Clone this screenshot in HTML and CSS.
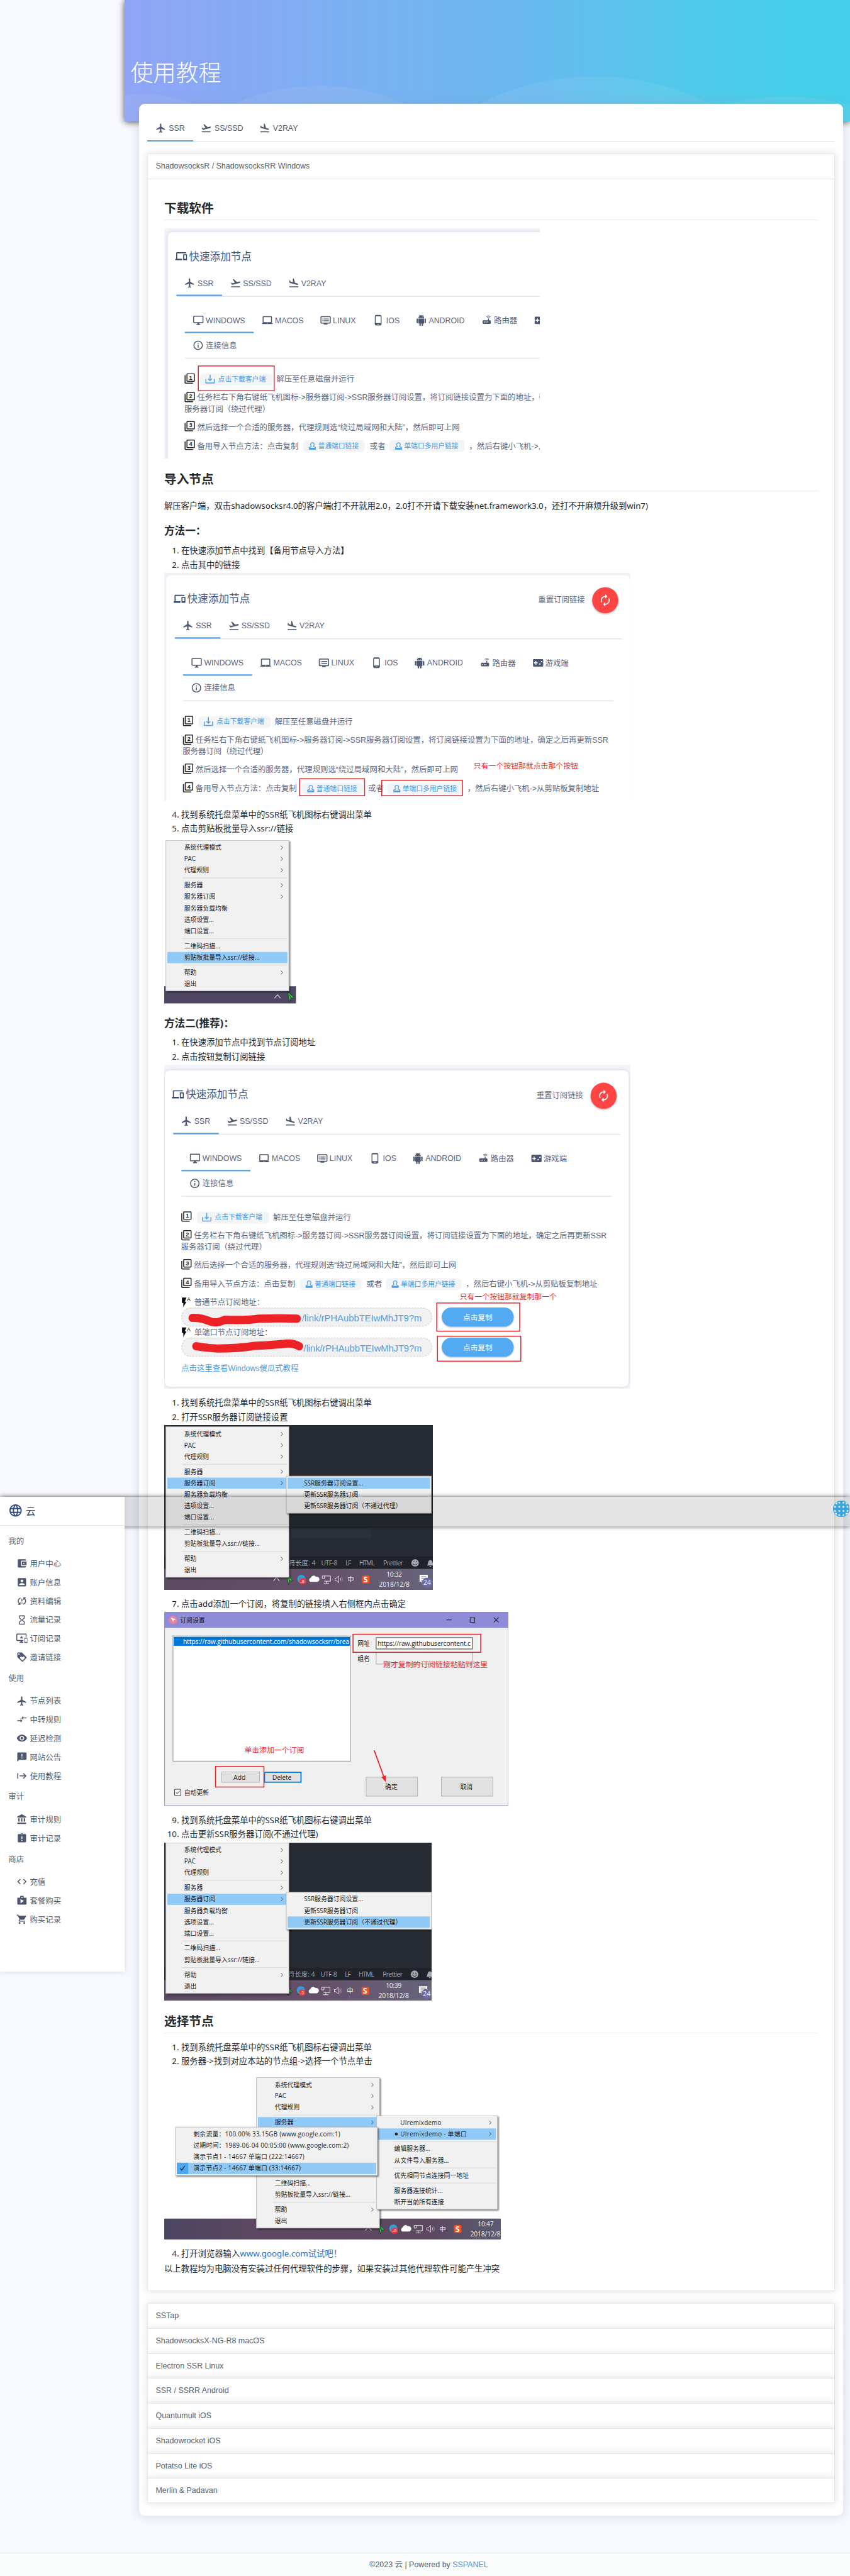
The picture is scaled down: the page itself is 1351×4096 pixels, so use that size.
FILE: index.html
```html
<!DOCTYPE html>
<html lang="zh">
<head>
<meta charset="utf-8">
<title>使用教程</title>
<link rel="stylesheet" href="styles.css">
</head>
<body>
<svg class="sprite" width="0" height="0" aria-hidden="true">
  <defs>
    <symbol id="flight" viewBox="0 0 24 24"><path d="M21 16v-2l-8-5V3.5c0-.83-.67-1.5-1.5-1.5S10 2.67 10 3.5V9l-8 5v2l8-2.5V19l-2 1.5V22l3.5-1 3.5 1v-1.5L13 19v-5.5l8 2.5z"/></symbol>
    <symbol id="takeoff" viewBox="0 0 24 24"><path d="M2.5 19h19v2h-19v-2zm19.57-9.36c-.21-.8-1.04-1.28-1.84-1.06L14.92 10l-6.9-6.43-1.93.51 4.14 7.17-4.97 1.33-1.97-1.54-1.45.39 2.59 4.49s7.12-1.9 16.57-4.43c.81-.23 1.28-1.05 1.07-1.85z"/></symbol>
    <symbol id="land" viewBox="0 0 24 24"><path d="M2.5 19h19v2h-19v-2zm16.84-3.15c.8.21 1.62-.26 1.84-1.06.21-.8-.26-1.62-1.06-1.84l-5.31-1.42-2.76-9.02L10.12 2v8.28L5.15 8.95l-.93-2.32-1.45-.39v5.17l16.57 4.44z"/></symbol>
    <symbol id="devices" viewBox="0 0 24 24"><path d="M4 6h18V4H4c-1.1 0-2 .9-2 2v11H0v3h14v-3H4V6zm19 2h-6c-.55 0-1 .45-1 1v10c0 .55.45 1 1 1h6c.55 0 1-.45 1-1V9c0-.55-.45-1-1-1zm-1 9h-4v-7h4v7z"/></symbol>
    <symbol id="desktop" viewBox="0 0 24 24"><path d="M21 2H3c-1.1 0-2 .9-2 2v12c0 1.1.9 2 2 2h7v2H8v2h8v-2h-2v-2h7c1.1 0 2-.9 2-2V4c0-1.1-.9-2-2-2zm0 14H3V4h18v12z"/></symbol>
    <symbol id="laptop" viewBox="0 0 24 24"><path d="M20 18c1.1 0 1.99-.9 1.99-2L22 5c0-1.1-.9-2-2-2H4c-1.1 0-2 .9-2 2v11c0 1.1.9 2 2 2H0c0 1.1.9 2 2 2h20c1.1 0 2-.9 2-2h-4zM4 5h16v11H4V5zm8 14c-.55 0-1-.45-1-1s.45-1 1-1 1 .45 1 1-.45 1-1 1z"/></symbol>
    <symbol id="dvr" viewBox="0 0 24 24"><path d="M21 3H3c-1.1 0-2 .9-2 2v12c0 1.1.9 2 2 2h5v2h8v-2h5c1.1 0 1.99-.9 1.99-2L23 5c0-1.1-.9-2-2-2zm0 14H3V5h18v12zm-2-9H8v2h11V8zm0 4H8v2h11v-2zM7 8H5v2h2V8zm0 4H5v2h2v-2z"/></symbol>
    <symbol id="phone" viewBox="0 0 24 24"><path d="M16 1H8C6.34 1 5 2.34 5 4v16c0 1.66 1.34 3 3 3h8c1.66 0 3-1.34 3-3V4c0-1.66-1.34-3-3-3zm-2 20h-4v-1h4v1zm3.25-3H6.75V4h10.5v14z"/></symbol>
    <symbol id="android" viewBox="0 0 24 24"><path d="M6 18c0 .55.45 1 1 1h1v3.5c0 .83.67 1.5 1.5 1.5s1.5-.67 1.5-1.5V19h2v3.5c0 .83.67 1.5 1.5 1.5s1.5-.67 1.5-1.5V19h1c.55 0 1-.45 1-1V8H6v10zM3.5 8C2.67 8 2 8.67 2 9.5v7c0 .83.67 1.5 1.5 1.5S5 17.33 5 16.5v-7C5 8.67 4.33 8 3.5 8zm17 0c-.83 0-1.5.67-1.5 1.5v7c0 .83.67 1.5 1.5 1.5s1.5-.67 1.5-1.5v-7c0-.83-.67-1.5-1.5-1.5zm-4.97-5.84l1.3-1.3c.2-.2.2-.51 0-.71-.2-.2-.51-.2-.71 0l-1.48 1.48C13.85 1.23 12.95 1 12 1c-.96 0-1.86.23-2.66.63L7.85.15c-.2-.2-.51-.2-.71 0-.2.2-.2.51 0 .71l1.31 1.31C6.97 3.26 6 5.01 6 7h12c0-1.99-.97-3.75-2.47-4.84zM10 5H9V4h1v1zm5 0h-1V4h1v1z"/></symbol>
    <symbol id="router" viewBox="0 0 24 24"><path d="M20.2 5.9l.8-.8C19.6 3.7 17.8 3 16 3s-3.6.7-5 2.1l.8.8C13 4.8 14.5 4.2 16 4.2s3 .6 4.2 1.7zm-.9.8c-.9-.9-2.1-1.4-3.3-1.4s-2.4.5-3.3 1.4l.8.8c.7-.7 1.6-1 2.5-1 .9 0 1.8.3 2.5 1l.8-.8zM19 13h-2V9h-2v4H5c-1.1 0-2 .9-2 2v4c0 1.1.9 2 2 2h14c1.1 0 2-.9 2-2v-4c0-1.1-.9-2-2-2zM8 18H6v-2h2v2zm3.5 0h-2v-2h2v2zm3.5 0h-2v-2h2v2z"/></symbol>
    <symbol id="game" viewBox="0 0 24 24"><path d="M21 4H3c-1.1 0-2 .9-2 2v12c0 1.1.9 2 2 2h18c1.1 0 2-.9 2-2V6c0-1.1-.9-2-2-2zm-10 9H8v3H6v-3H3v-2h3V8h2v3h3v2zm4.5 3c-.83 0-1.5-.67-1.5-1.5s.67-1.5 1.5-1.5 1.5.67 1.5 1.5-.67 1.5-1.5 1.5zm4-5c-.83 0-1.5-.67-1.5-1.5S18.67 8 19.5 8s1.5.67 1.5 1.5-.67 1.5-1.5 1.5z"/></symbol>
    <symbol id="info" viewBox="0 0 24 24"><path d="M11 17h2v-6h-2v6zm1-15C6.48 2 2 6.48 2 12s4.48 10 10 10 10-4.48 10-10S17.52 2 12 2zm0 18c-4.41 0-8-3.59-8-8s3.59-8 8-8 8 3.59 8 8-3.59 8-8 8zM11 9h2V7h-2v2z"/></symbol>
    <symbol id="frame" viewBox="0 0 24 24"><path d="M3 5H1v16c0 1.1.9 2 2 2h16v-2H3V5zm18-4H7c-1.1 0-2 .9-2 2v14c0 1.1.9 2 2 2h14c1.1 0 2-.9 2-2V3c0-1.1-.9-2-2-2zm0 16H7V3h14v14z"/></symbol>
    <symbol id="renew" viewBox="0 0 24 24"><path d="M12 6v3l4-4-4-4v3c-4.42 0-8 3.58-8 8 0 1.57.46 3.03 1.24 4.26L6.7 14.8c-.45-.83-.7-1.79-.7-2.8 0-3.31 2.69-6 6-6zm6.76 1.74L17.3 9.2c.44.84.7 1.79.7 2.8 0 3.31-2.69 6-6 6v-3l-4 4 4 4v-3c4.42 0 8-3.58 8-8 0-1.57-.46-3.03-1.24-4.26z"/></symbol>
    <symbol id="bolt" viewBox="0 0 24 24"><path d="M3 2v12h3v9l7-12H9l4-9H3z"/></symbol>
    <symbol id="download" viewBox="0 0 24 24"><path d="M12 1v14M7.5 10.5L12 15l4.5-4.5M2 11v9.500h20V11" fill="none" stroke="currentColor" stroke-width="2.2"/></symbol>
    <symbol id="stamp" viewBox="0 0 24 24"><path d="M12 2.500a5.500 5.500 0 0 1 3.500 9.700V14L21 16.500V19H3v-2.500L8.500 14v-1.800A5.500 5.500 0 0 1 12 2.500z" fill="none" stroke="currentColor" stroke-width="2.2"/><path d="M2 18h20v5H2z"/></symbol>
    <symbol id="globe" viewBox="0 0 24 24"><path d="M11.99 2C6.47 2 2 6.48 2 12s4.47 10 9.99 10C17.52 22 22 17.52 22 12S17.52 2 11.99 2zm6.93 6h-2.95c-.32-1.25-.78-2.45-1.38-3.56 1.84.63 3.37 1.91 4.33 3.56zM12 4.04c.83 1.2 1.48 2.53 1.91 3.96h-3.82c.43-1.43 1.08-2.76 1.91-3.96zM4.26 14C4.1 13.36 4 12.69 4 12s.1-1.36.26-2h3.38c-.08.66-.14 1.32-.14 2 0 .68.06 1.34.14 2H4.26zm.82 2h2.95c.32 1.25.78 2.45 1.38 3.56-1.84-.63-3.37-1.9-4.33-3.56zm2.95-8H5.08c.96-1.66 2.49-2.93 4.33-3.56C8.81 5.55 8.35 6.75 8.03 8zM12 19.96c-.83-1.2-1.48-2.53-1.91-3.96h3.82c-.43 1.43-1.08 2.76-1.91 3.96zM14.34 14H9.66c-.09-.66-.16-1.32-.16-2 0-.68.07-1.35.16-2h4.68c.09.65.16 1.32.16 2 0 .68-.07 1.34-.16 2zm.25 5.56c.6-1.11 1.06-2.31 1.38-3.56h2.95c-.96 1.65-2.49 2.93-4.33 3.56zM16.36 14c.08-.66.14-1.32.14-2 0-.68-.06-1.34-.14-2h3.38c.16.64.26 1.31.26 2s-.1 1.36-.26 2h-3.38z"/></symbol>
    <symbol id="wallet" viewBox="0 0 24 24"><path d="M21 18v1c0 1.1-.9 2-2 2H5c-1.11 0-2-.9-2-2V5c0-1.1.89-2 2-2h14c1.1 0 2 .9 2 2v1h-9c-1.11 0-2 .9-2 2v8c0 1.1.89 2 2 2h9zm-9-2h10V8H12v8zm4-2.5c-.83 0-1.5-.67-1.5-1.5s.67-1.5 1.5-1.5 1.5.67 1.5 1.5-.67 1.5-1.5 1.5z"/></symbol>
    <symbol id="account" viewBox="0 0 24 24"><path d="M3 5v14c0 1.1.89 2 2 2h14c1.1 0 2-.9 2-2V5c0-1.1-.9-2-2-2H5c-1.11 0-2 .9-2 2zm12 4c0 1.66-1.34 3-3 3s-3-1.34-3-3 1.34-3 3-3 3 1.34 3 3zm-9 8c0-2 4-3.1 6-3.1s6 1.1 6 3.1v1H6v-1z"/></symbol>
    <symbol id="sync" viewBox="0 0 24 24"><path d="M3 12c0 2.21.91 4.2 2.36 5.64L3 20h6v-6l-2.24 2.24C5.68 15.15 5 13.66 5 12c0-2.61 1.67-4.83 4-5.65V4.26C5.55 5.15 3 8.27 3 12zm8 5h2v-2h-2v2zM21 4h-6v6l2.24-2.24C18.32 8.85 19 10.34 19 12c0 2.61-1.67 4.83-4 5.65v2.09c3.45-.89 6-4.01 6-7.74 0-2.21-.91-4.2-2.36-5.64L21 4zm-10 9h2V7h-2v6z"/></symbol>
    <symbol id="hourglass" viewBox="0 0 24 24"><path d="M6 2v6h.01L6 8.01 10 12l-4 4 .01.01H6V22h12v-5.99h-.01L18 16l-4-4 4-3.99-.01-.01H18V2H6zm10 14.5V20H8v-3.5l4-4 4 4zm-4-5l-4-4V4h8v3.500l-4 4z"/></symbol>
    <symbol id="important" viewBox="0 0 24 24"><path d="M23 11.01L18 11c-.55 0-1 .45-1 1v9c0 .55.45 1 1 1h5c.55 0 1-.45 1-1v-9c0-.55-.45-.99-1-.99zM23 20h-5v-7h5v7zM20 2H2C.89 2 0 2.89 0 4v12c0 1.1.89 2 2 2h7v2H7v2h8v-2h-2v-2h2v-2H2V4h18v5h2V4c0-1.11-.9-2-2-2zm-8.03 7L11 6l-.97 3H7l2.47 1.76-.94 2.91 2.47-1.8 2.47 1.8-.94-2.91L15 9h-3.03z"/></symbol>
    <symbol id="loyalty" viewBox="0 0 24 24"><path d="M21.41 11.58l-9-9C12.05 2.22 11.55 2 11 2H4c-1.1 0-2 .9-2 2v7c0 .55.22 1.05.59 1.42l9 9c.36.36.86.58 1.41.58.55 0 1.05-.22 1.41-.59l7-7c.37-.36.59-.86.59-1.41 0-.55-.23-1.06-.59-1.42zM5.5 7C4.67 7 4 6.33 4 5.5S4.67 4 5.5 4 7 4.67 7 5.5 6.33 7 5.5 7zm11.77 8.27L13 19.54l-4.27-4.27C8.28 14.81 8 14.19 8 13.5c0-1.38 1.12-2.5 2.5-2.5.69 0 1.32.28 1.77.74l.73.72.73-.73c.45-.45 1.08-.73 1.77-.73 1.38 0 2.5 1.12 2.5 2.5 0 .69-.28 1.32-.73 1.77z"/></symbol>
    <symbol id="compare" viewBox="0 0 24 24"><path d="M9.01 14H2v2h7.01v3L13 15l-3.99-4v3zm5.98-1v-3H22V8h-7.01V5L11 9l3.99 4z"/></symbol>
    <symbol id="eye" viewBox="0 0 24 24"><path d="M12 4.5C7 4.5 2.73 7.61 1 12c1.73 4.39 6 7.5 11 7.5s9.27-3.11 11-7.5c-1.73-4.39-6-7.5-11-7.5zM12 17c-2.76 0-5-2.24-5-5s2.24-5 5-5 5 2.24 5 5-2.24 5-5 5zm0-8c-1.66 0-3 1.34-3 3s1.34 3 3 3 3-1.34 3-3-1.34-3-3-3z"/></symbol>
    <symbol id="announce" viewBox="0 0 24 24"><path d="M20 2H4c-1.1 0-1.99.9-1.99 2L2 22l4-4h14c1.1 0 2-.9 2-2V4c0-1.1-.9-2-2-2zm-7 9h-2V5h2v6zm0 4h-2v-2h2v2z"/></symbol>
    <symbol id="start" viewBox="0 0 24 24"><path d="M2 6h2.200v12H2zM7 11h11.200l-4-4 1.400-1.400L22 12l-6.400 6.400-1.400-1.400 4-4H7z"/></symbol>
    <symbol id="bank" viewBox="0 0 24 24"><path d="M4 10v7h3v-7H4zm6 0v7h3v-7h-3zM2 22h19v-3H2v3zm14-12v7h3v-7h-3zm-4.5-9L2 6v2h19V6l-9.5-5z"/></symbol>
    <symbol id="late" viewBox="0 0 24 24"><path d="M19 3h-4.18C14.4 1.84 13.3 1 12 1c-1.3 0-2.4.84-2.82 2H5c-1.1 0-2 .9-2 2v14c0 1.1.9 2 2 2h14c1.1 0 2-.9 2-2V5c0-1.1-.9-2-2-2zm-6 15h-2v-2h2v2zm0-4h-2V8h2v6zm-1-9c-.55 0-1-.45-1-1s.45-1 1-1 1 .45 1 1-.45 1-1 1z"/></symbol>
    <symbol id="code" viewBox="0 0 24 24"><path d="M9.4 16.6L4.8 12l4.6-4.6L8 6l-6 6 6 6 1.4-1.4zm5.2 0l4.6-4.6-4.6-4.6L16 6l6 6-6 6-1.4-1.4z"/></symbol>
    <symbol id="shop" viewBox="0 0 24 24"><path d="M16 6V4c0-1.11-.89-2-2-2h-4c-1.11 0-2 .89-2 2v2H2v13c0 1.11.89 2 2 2h16c1.11 0 2-.89 2-2V6h-6zm-6-2h4v2h-4V4zM9 18V9l7.5 4L9 18z"/></symbol>
    <symbol id="cart" viewBox="0 0 24 24"><path d="M7 18c-1.1 0-1.99.9-1.99 2S5.9 22 7 22s2-.9 2-2-.9-2-2-2zM1 2v2h2l3.6 7.59-1.35 2.45c-.16.28-.25.61-.25.96 0 1.1.9 2 2 2h12v-2H7.42c-.14 0-.25-.11-.25-.25l.03-.12.9-1.63h7.45c.75 0 1.41-.41 1.75-1.03l3.58-6.49c.08-.14.12-.31.12-.48 0-.55-.45-1-1-1H5.21l-.94-2H1zm16 16c-1.1 0-1.99.9-1.99 2s.89 2 1.99 2 2-.9 2-2-.9-2-2-2z"/></symbol>

    <linearGradient id="taskbar"><stop offset="0" stop-color="#5b4a62"/><stop offset=".6" stop-color="#65506a"/><stop offset="1" stop-color="#66657c"/></linearGradient>
    <linearGradient id="taskbar-wide"><stop offset="0" stop-color="#4b4561"/><stop offset=".3" stop-color="#5e4861"/><stop offset=".8" stop-color="#5c4960"/><stop offset="1" stop-color="#5b5b71"/></linearGradient>
    <pattern id="dots" width="11.15" height="11.15" patternUnits="userSpaceOnUse"><circle cx="5.6" cy="5.6" r="2.4" fill="#fff"/></pattern>

    <g id="chev"><path d="M-2.500-5L2.500 0-2.500 5" fill="none" stroke="#444" stroke-width="1.6"/></g>
    <g id="menu-lines">
      <path d="M44 100.500h282M44 263.400h282M44 334.800h282" stroke="#d5d5d5" stroke-width="1.5"/>
      <use href="#chev" x="311" y="19.4"/><use href="#chev" x="311" y="49.5"/><use href="#chev" x="311" y="80"/>
      <use href="#chev" x="311" y="120.3"/><use href="#chev" x="311" y="151"/><use href="#chev" x="311" y="354.5"/>
    </g>
    <g id="plane"><path d="M-9-16L10 4 1 3-2 14z" fill="#43c552" stroke="#1c4022" stroke-width="1.5"/><path d="M-9-16L1 3" stroke="#1c4022" stroke-width="1.5"/></g>
    <g id="tray">
      <path d="M733 4l8-9 8 9" fill="none" stroke="#ddd" stroke-width="2"/>
      <use href="#plane" x="775.6" y="0"/>
      <circle cx="808" cy="-1" r="11" fill="#2f9fd8"/><rect x="803" y="-3" width="17" height="16" rx="6" fill="#ea3b41"/>
      <path d="M832 7a6 6 0 0 1 1-11 8 8 0 0 1 14-3 7 7 0 0 1 4 14z" fill="#fff"/>
      <path d="M864-9h22v14h-17M875 5v6M868 11h14M864-9v7h6v-7" fill="none" stroke="#eee" stroke-width="1.6"/>
      <path d="M898-3h4l6-6v18l-6-6h-4zM912-4q3 4 0 8" fill="none" stroke="#eee" stroke-width="1.5"/><path d="M915-7q6 7 0 14" fill="none" stroke="#999" stroke-width="1.5"/>
      <rect x="971" y="-10" width="20" height="21" rx="4" fill="#f4511e"/>
    </g>
    <g id="notice"><path d="M1125-11h22v18h-12l-4 5v-5h-6z" fill="#fff"/><path d="M1129-6h14M1129-1h14M1129 4h14" stroke="#66657c" stroke-width="1.6"/><circle cx="1145" cy="10" r="13.5" fill="#6c6ca3"/></g>
    <g id="face"><circle cx="1113" cy="0" r="10" fill="#a3a9b5"/><circle cx="1109.5" cy="-3" r="1.6" fill="#202329"/><circle cx="1116.5" cy="-3" r="1.6" fill="#202329"/><path d="M1107 2q6 7 12 0" fill="none" stroke="#202329" stroke-width="1.6"/><path d="M1145 7c4-4 1-14 9-15 8 1 5 11 9 15zM1151 8h6l-3 3z" fill="#a3a9b5"/></g>

    <g id="panel-shapes">
      <use href="#devices" x="465" y="1591" width="32" height="32" fill="#32496f"/>
      <g fill="#4c566e">
        <use href="#flight" x="489" y="1664" width="30" height="30"/><use href="#takeoff" x="612" y="1664" width="30" height="30"/><use href="#land" x="768" y="1664" width="30" height="30"/>
        <use href="#desktop" x="512" y="1764" width="30" height="30"/><use href="#laptop" x="697" y="1764" width="30" height="30"/><use href="#dvr" x="853.5" y="1764" width="30" height="30"/><use href="#phone" x="994" y="1763" width="31" height="31"/><use href="#android" x="1110" y="1764" width="30" height="30"/><use href="#router" x="1286" y="1763" width="29" height="29"/><use href="#game" x="1428" y="1764" width="30" height="30"/>
        <use href="#info" x="511.5" y="1831" width="30" height="30"/>
      </g>
      <path d="M468.400 1714.500H1668.500M490.700 1880.600H1645" stroke="#e4e6e9" stroke-width="2.5"/>
      <path d="M468.400 1712H590.700M490.700 1811.600H675.600" stroke="#559fdf" stroke-width="4"/>
      <g fill="#222"><use href="#frame" x="489" y="1920" width="30" height="30"/><use href="#frame" x="489" y="1970" width="30" height="30"/><use href="#frame" x="489" y="2048" width="30" height="30"/><use href="#frame" x="489" y="2098" width="30" height="30"/></g>
      <g fill="#f3f4f6"><rect x="532" y="1922" width="194" height="31.5" rx="9"/><rect x="808.6" y="2100.5" width="165" height="31.5" rx="9"/><rect x="1039" y="2100.5" width="202" height="31.5" rx="9"/></g>
      <g color="#4a9fea" fill="#4a9fea"><use href="#download" x="545" y="1924" width="27" height="27"/><use href="#stamp" x="822" y="2105" width="22" height="22"/><use href="#stamp" x="1053" y="2105" width="22" height="22"/></g>
    </g>
    <g id="reset"><circle class="fab" cx="1623" cy="1610.8" r="35" fill="#ff4444"/><use href="#renew" x="1605" y="1593" width="36" height="36" fill="#fff"/></g>
  </defs>
</svg>

<main class="content">
  <header class="hero">
    <svg class="waves" width="1153" height="193" viewBox="334 0 1946 326" preserveAspectRatio="none" fill="#fff" fill-opacity=".07"><circle cx="376" cy="664" r="412"/><circle cx="857" cy="791" r="561"/><circle cx="1595" cy="891" r="686"/><circle cx="2107" cy="884" r="625"/></svg>
    <h1>使用教程</h1>
  </header>

  <section class="card">
    <nav class="tabs">
      <a class="tab active"><svg><use href="#flight"/></svg>SSR</a>
      <a class="tab"><svg><use href="#takeoff"/></svg>SS/SSD</a>
      <a class="tab"><svg><use href="#land"/></svg>V2RAY</a>
    </nav>

    <article class="tile open">
      <div class="tile-head">ShadowsocksR / ShadowsocksRR Windows</div>
      <div class="guide">
        <h2>下载软件</h2>
        <svg class="shot first" width="597.5" height="366" viewBox="440 611.5 1008.4 617.7" preserveAspectRatio="none">
          <rect x="440" y="611" width="1010" height="620" fill="#f2f4fb"/>
          <rect class="soft" x="449.6" y="621.5" width="1030" height="640" rx="12" fill="#fff"/>
          <g transform="translate(4.5 -920.5)" class="ui">
            <use href="#panel-shapes"/>
            <text class="ttl" x="502" y="1617.5">快速添加节点</text>
            <text x="525" y="1686.5">SSR</text><text x="647" y="1686.5">SS/SSD</text><text x="803" y="1686.5">V2RAY</text>
            <text x="547" y="1786.5">WINDOWS</text><text x="732.7" y="1786.5">MACOS</text><text x="888" y="1786.5">LINUX</text><text x="1031" y="1786.5">IOS</text><text x="1145" y="1786.5">ANDROID</text><text x="1320" y="1787">路由器</text>
            <text x="547" y="1854">连接信息</text>
            <g class="num"><text x="506.5" y="1938">1</text><text x="506.5" y="1988">2</text><text x="506.5" y="2066">3</text><text x="506.5" y="2116">4</text></g>
            <text class="lnk" x="580" y="1943.5">点击下载客户端</text><text x="736.5" y="1944.5">解压至任意磁盘并运行</text>
            <text x="524" y="1993.3">任务栏右下角右键纸飞机图标-&gt;服务器订阅-&gt;SSR服务器订阅设置，将订阅链接设置为下面的地址，确</text>
            <text x="489.5" y="2024.5">服务器订阅（绕过代理）</text>
            <text x="524" y="2073.3" textLength="704">然后选择一个合适的服务器，代理规则选“绕过局域网和大陆”，然后即可上网</text>
            <text x="524" y="2124">备用导入节点方法：点击复制</text><text class="lnk" x="848" y="2123">普通端口链接</text><text x="987" y="2124">或者</text><text class="lnk" x="1079" y="2123">单端口多用户链接</text><text x="1253" y="2124">，然后右键小飞机-&gt;从</text>
          </g>
          <rect class="mark" x="531.5" y="981" width="203.5" height="66.5"/>
        </svg>

        <h2>导入节点</h2>
        <p class="lead">解压客户端，双击shadowsocksr4.0的客户端(打不开就用2.0，2.0打不开请下载安装net.framework3.0，还打不开麻烦升级到win7)</p>
        <h3>方法一：</h3>
        <ol>
          <li>在快速添加节点中找到【备用节点导入方法】</li>
          <li>点击其中的链接</li>
        </ol>
        <svg class="shot" width="740.7" height="362" viewBox="440 1537.6 1250 611" preserveAspectRatio="none">
          <rect x="440" y="1537" width="1250" height="613" fill="#f0f1f7"/>
          <path d="M446 2160V1556q0-12 12-12H1676q12 0 14 14v602z" fill="#fff"/>
          <g class="ui">
            <use href="#panel-shapes"/><use href="#reset"/>
            <text class="ttl" x="502" y="1617.5">快速添加节点</text><text x="1443" y="1617">重置订阅链接</text>
            <text x="525" y="1686.5">SSR</text><text x="647" y="1686.5">SS/SSD</text><text x="803" y="1686.5">V2RAY</text>
            <text x="547" y="1786.5">WINDOWS</text><text x="732.7" y="1786.5">MACOS</text><text x="888" y="1786.5">LINUX</text><text x="1031" y="1786.5">IOS</text><text x="1145" y="1786.5">ANDROID</text><text x="1320" y="1787">路由器</text><text x="1462" y="1787">游戏端</text>
            <text x="547" y="1854">连接信息</text>
            <g class="num"><text x="506.5" y="1938">1</text><text x="506.5" y="1988">2</text><text x="506.5" y="2066">3</text><text x="506.5" y="2116">4</text></g>
            <text class="lnk" x="580" y="1943.5">点击下载客户端</text><text x="736.5" y="1944.5">解压至任意磁盘并运行</text>
            <text x="524" y="1993.3" textLength="1107">任务栏右下角右键纸飞机图标-&gt;服务器订阅-&gt;SSR服务器订阅设置，将订阅链接设置为下面的地址，确定之后再更新SSR</text>
            <text x="489.5" y="2024.5">服务器订阅（绕过代理）</text>
            <text x="524" y="2073.3" textLength="704">然后选择一个合适的服务器，代理规则选“绕过局域网和大陆”，然后即可上网</text>
            <text x="524" y="2124">备用导入节点方法：点击复制</text><text class="lnk" x="848" y="2123">普通端口链接</text><text x="987" y="2124">或者</text><text class="lnk" x="1079" y="2123">单端口多用户链接</text><text x="1253" y="2124">，然后右键小飞机-&gt;从剪贴板复制地址</text>
          </g>
          <text class="note" x="1270" y="2063">只有一个按钮那就点击那个按钮</text>
          <rect class="mark" x="803" y="2090" width="174.5" height="45.5"/><rect class="mark" x="1023.5" y="2094" width="216.5" height="41.5"/>
        </svg>
        <ol start="4">
          <li>找到系统托盘菜单中的SSR纸飞机图标右键调出菜单</li>
          <li>点击剪贴板批量导入ssr://链接</li>
        </ol>
        <svg class="shot tray-menu" width="209.7" height="259.5" viewBox="440 2255 354 438" preserveAspectRatio="none">
          <rect x="440" y="2647" width="353.5" height="46" fill="#4f4662"/>
          <path d="M736 2679l8-9 8 9" fill="none" stroke="#ddd" stroke-width="2"/><use href="#plane" x="779" y="2675"/>
          <g transform="translate(444.5 2255.5)" class="win">
            <rect class="pop" width="330" height="404"/><rect class="hl" x="4" y="299.5" width="322" height="30"/><use href="#menu-lines"/>
            <text x="49" y="25.5">系统代理模式</text><text x="49" y="55.5">PAC</text><text x="49" y="86">代理规则</text><text x="49" y="126.5">服务器</text><text x="49" y="157">服务器订阅</text><text x="49" y="188">服务器负载均衡</text><text x="49" y="218.5">选项设置...</text><text x="49" y="249">端口设置...</text><text x="49" y="289">二维码扫描...</text><text x="49" y="320">剪贴板批量导入ssr://链接...</text><text x="49" y="360.5">帮助</text><text x="49" y="391">退出</text>
          </g>
        </svg>

        <h3>方法二(推荐)：</h3>
        <ol>
          <li>在快速添加节点中找到节点订阅地址</li>
          <li>点击按钮复制订阅链接</li>
        </ol>
        <svg class="shot" width="740.7" height="515.1" viewBox="440 2859.5 1250 869.4" preserveAspectRatio="none">
          <rect x="440" y="2859" width="1250" height="871" fill="#f3f4fb"/>
          <rect class="soft" x="441.6" y="2874.5" width="1244.5" height="849" rx="14" fill="#fff"/>
          <g transform="translate(-4.4 1332)" class="ui">
            <use href="#panel-shapes"/><use href="#reset"/>
            <text class="ttl" x="502" y="1617.5">快速添加节点</text><text x="1443" y="1617">重置订阅链接</text>
            <text x="525" y="1686.5">SSR</text><text x="647" y="1686.5">SS/SSD</text><text x="803" y="1686.5">V2RAY</text>
            <text x="547" y="1786.5">WINDOWS</text><text x="732.7" y="1786.5">MACOS</text><text x="888" y="1786.5">LINUX</text><text x="1031" y="1786.5">IOS</text><text x="1145" y="1786.5">ANDROID</text><text x="1320" y="1787">路由器</text><text x="1462" y="1787">游戏端</text>
            <text x="547" y="1854">连接信息</text>
            <g class="num"><text x="506.5" y="1938">1</text><text x="506.5" y="1988">2</text><text x="506.5" y="2066">3</text><text x="506.5" y="2116">4</text></g>
            <text class="lnk" x="580" y="1943.5">点击下载客户端</text><text x="736.5" y="1944.5">解压至任意磁盘并运行</text>
            <text x="524" y="1993.3" textLength="1107">任务栏右下角右键纸飞机图标-&gt;服务器订阅-&gt;SSR服务器订阅设置，将订阅链接设置为下面的地址，确定之后再更新SSR</text>
            <text x="489.5" y="2024.5">服务器订阅（绕过代理）</text>
            <text x="524" y="2073.3" textLength="704">然后选择一个合适的服务器，代理规则选“绕过局域网和大陆”，然后即可上网</text>
            <text x="524" y="2124">备用导入节点方法：点击复制</text><text class="lnk" x="848" y="2123">普通端口链接</text><text x="987" y="2124">或者</text><text class="lnk" x="1079" y="2123">单端口多用户链接</text><text x="1253" y="2124">，然后右键小飞机-&gt;从剪贴板复制地址</text>
          </g>
          <g class="ui">
            <use href="#bolt" x="484" y="3482" width="29" height="29" fill="#000"/><text class="mini" x="501" y="3494">A</text>
            <text x="520.5" y="3505">普通节点订阅地址：</text>
            <rect class="field" x="487" y="3512.5" width="671" height="48.5" rx="24"/>
            <text class="url" x="809.5" y="3548.5" textLength="321.5">/link/rPHAubbTEIwMhJT9?m</text>
            <use href="#bolt" x="484" y="3562" width="29" height="29" fill="#000"/><text class="mini" x="501" y="3575">A</text>
            <text x="520.5" y="3586">单端口节点订阅地址：</text>
            <rect class="field" x="487" y="3593" width="671" height="49" rx="24"/>
            <text class="url" x="814" y="3629" textLength="317">/link/rPHAubbTEIwMhJT9?m</text>
            <rect class="btn" x="1184.5" y="3511" width="193" height="51" rx="25.5"/><rect class="btn" x="1184.5" y="3592" width="193" height="51" rx="25.5"/>
            <text class="btn-t" x="1241.6" y="3544.5">点击复制</text><text class="btn-t" x="1241.6" y="3625.5">点击复制</text>
            <text class="foot" x="486" y="3682" textLength="314">点击这里查看Windows傻瓜式教程</text>
          </g>
          <path d="M516 3539q20-1 44 8 16 9 42-3 60 2 92-3 60-2 102 0M526 3615q30 5 56 6 60 0 100-7 60-3 84-6 20-2 36 7" fill="none" stroke="#ec2227" stroke-width="22" stroke-linecap="round" stroke-linejoin="round"/>
          <text class="note" x="1232.7" y="3489">只有一个按钮那就复制那一个</text>
          <rect class="mark" x="1171" y="3499" width="222.5" height="75.5"/><rect class="mark" x="1173" y="3588" width="223.5" height="67"/>
        </svg>
        <ol>
          <li>找到系统托盘菜单中的SSR纸飞机图标右键调出菜单</li>
          <li>打开SSR服务器订阅链接设置</li>
        </ol>
        <svg class="shot" width="427.1" height="261.5" viewBox="440 3826 720.8 441.5" preserveAspectRatio="none">
          <rect x="440" y="3826" width="721" height="442" fill="#272b33"/><rect x="780" y="4102.5" width="216.6" height="26" fill="#2c303a"/>
          <rect x="440" y="4179" width="721" height="33" fill="#202329"/><rect x="440" y="4212" width="721" height="56" fill="url(#taskbar)"/>
          <g class="status"><text x="774" y="4203">符长度: 4</text><text x="861" y="4203" textLength="44">UTF-8</text><text x="926" y="4203" textLength="16">LF</text><text x="963" y="4203" textLength="42">HTML</text><text x="1027.5" y="4203" textLength="53.5">Prettier</text></g>
          <use href="#face" y="4196"/><use href="#tray" y="4240"/><use href="#notice" y="4239"/>
          <g class="clock"><text x="931.5" y="4247">中</text><text class="sg" x="974.5" y="4248">S</text><text class="cnt" x="804" y="4249">..8</text><text x="1036" y="4233" textLength="42">10:32</text><text x="1016" y="4259.5" textLength="82">2018/12/8</text><text x="1135.5" y="4255.5">24</text></g>
          <g transform="translate(444.5 3830.5)" class="win">
            <rect class="pop" width="330" height="404"/><rect class="hl" x="4" y="136.5" width="322" height="30"/><use href="#menu-lines"/>
            <text x="49" y="25.5">系统代理模式</text><text x="49" y="55.5">PAC</text><text x="49" y="86">代理规则</text><text x="49" y="126.5">服务器</text><text x="49" y="157">服务器订阅</text><text x="49" y="188">服务器负载均衡</text><text x="49" y="218.5">选项设置...</text><text x="49" y="249">端口设置...</text><text x="49" y="289">二维码扫描...</text><text x="49" y="320">剪贴板批量导入ssr://链接...</text><text x="49" y="360.5">帮助</text><text x="49" y="391">退出</text>
            <rect class="pop" x="323" y="132.5" width="389" height="99.5"/><rect class="hl" x="326.5" y="136.5" width="382" height="30"/>
            <text x="370.5" y="157">SSR服务器订阅设置...</text><text x="370.5" y="188">更新SSR服务器订阅</text><text x="370.5" y="218.5">更新SSR服务器订阅（不通过代理）</text>
          </g>
        </svg>
        <ol start="7">
          <li>点击add添加一个订阅，将复制的链接填入右侧框内点击确定</li>
        </ol>
        <svg class="shot" width="547.5" height="308.7" viewBox="440 4328 924 521" preserveAspectRatio="none">
          <rect x="441" y="4329" width="922" height="519" fill="#f0f0f0" stroke="#a39fdc" stroke-width="2"/><rect x="440" y="4328" width="924" height="43" fill="#8f8bd8"/>
          <circle cx="463.5" cy="4349.5" r="11" fill="#ef7f98"/><path d="M458 4343l13 5-5 2-2 5z" fill="#fff"/>
          <path d="M1197 4349.500h14M1260.500 4343.500h12.500v12.500h-12.500zM1324 4343l13 13M1337 4343l-13 13" fill="none" stroke="#222" stroke-width="1.8"/>
          <rect x="463.5" y="4392.5" width="476.5" height="336" fill="#fff" stroke="#828790" stroke-width="1.5"/><rect x="465.5" y="4395" width="472.5" height="24" fill="#0078d7"/>
          <text class="w18" x="490.5" y="4414" fill="#fff" textLength="446">https://raw.githubusercontent.com/shadowsocksrr/brea</text>
          <rect x="1008.5" y="4437" width="258" height="31" fill="#f0f0f0" stroke="#a0a0a0" stroke-width="1.5"/><rect x="1008.5" y="4397" width="258" height="30.5" fill="#fff" stroke="#555" stroke-width="2"/>
          <g class="win">
            <text x="482.5" y="4356">订阅设置</text><text x="958.5" y="4419">网址</text><text x="958.5" y="4459">组名</text>
            <text class="w18" x="1012" y="4419.5" textLength="250">https://raw.githubusercontent.c</text>
            <rect class="wbtn" x="594.5" y="4757.5" width="101" height="28"/><rect class="wbtn focus" x="709" y="4758.5" width="98" height="26.5"/><rect class="wbtn" x="981.5" y="4771.5" width="138" height="51"/><rect class="wbtn" x="1183.5" y="4771.5" width="138" height="51"/>
            <text class="w18" x="625.5" y="4779" textLength="33">Add</text><text class="w18" x="730" y="4779" textLength="51.5">Delete</text>
            <text x="1032.5" y="4803.5">确定</text><text x="1234" y="4803.5">取消</text><text x="493.5" y="4819">自动更新</text>
          </g>
          <path d="M468 4804h16.500v17H468zM471 4812l4 4 7-8" fill="#fff" stroke="#333" stroke-width="1.6"/>
          <text class="note" x="1027.5" y="4477">刚才复制的订阅链接粘贴到这里</text><text class="note" x="655" y="4706">单击添加一个订阅</text>
          <rect class="mark" x="946.5" y="4388" width="342.5" height="48.5"/><rect class="mark" x="577.5" y="4743" width="130" height="55"/>
          <path d="M1003.600 4700.800L1029 4770" stroke="#ec2227" stroke-width="3" stroke-linecap="round"/><path d="M1034.500 4785l-12-14 12-4z" fill="#ec2227"/>
        </svg>
        <ol start="9">
          <li>找到系统托盘菜单中的SSR纸飞机图标右键调出菜单</li>
          <li>点击更新SSR服务器订阅(不通过代理)</li>
        </ol>
        <svg class="shot last" width="425.4" height="251.2" viewBox="440 4946.5 718 424" preserveAspectRatio="none">
          <rect x="440" y="4946" width="719" height="425" fill="#272b33"/>
          <rect x="440" y="5283" width="719" height="33" fill="#202329"/><rect x="440" y="5315.5" width="719" height="56" fill="url(#taskbar)"/>
          <g transform="translate(-1.4 1103.6)">
            <g class="status"><text x="774" y="4203">符长度: 4</text><text x="861" y="4203" textLength="44">UTF-8</text><text x="926" y="4203" textLength="16">LF</text><text x="963" y="4203" textLength="42">HTML</text><text x="1027.5" y="4203" textLength="53.5">Prettier</text></g>
            <use href="#face" y="4196"/><use href="#tray" y="4240"/><use href="#notice" y="4239"/>
            <g class="clock"><text x="931.5" y="4247">中</text><text class="sg" x="974.5" y="4248">S</text><text class="cnt" x="804" y="4249">..5</text><text x="1036" y="4233" textLength="42">10:39</text><text x="1016" y="4259.5" textLength="82">2018/12/8</text><text x="1135.5" y="4255.5">24</text></g>
          </g>
          <g transform="translate(444.5 4947)" class="win">
            <rect class="pop" width="330" height="404"/><rect class="hl" x="4" y="136.5" width="322" height="30"/><use href="#menu-lines"/>
            <text x="49" y="25.5">系统代理模式</text><text x="49" y="55.5">PAC</text><text x="49" y="86">代理规则</text><text x="49" y="126.5">服务器</text><text x="49" y="157">服务器订阅</text><text x="49" y="188">服务器负载均衡</text><text x="49" y="218.5">选项设置...</text><text x="49" y="249">端口设置...</text><text x="49" y="289">二维码扫描...</text><text x="49" y="320">剪贴板批量导入ssr://链接...</text><text x="49" y="360.5">帮助</text><text x="49" y="391">退出</text>
            <rect class="pop" x="323" y="132.5" width="389" height="99.5"/><rect class="hl" x="326.5" y="197.5" width="382" height="30.5"/>
            <text x="370.5" y="157">SSR服务器订阅设置...</text><text x="370.5" y="188">更新SSR服务器订阅</text><text x="370.5" y="218.5">更新SSR服务器订阅（不通过代理）</text>
          </g>
        </svg>

        <h2 class="pick">选择节点</h2>
        <ol>
          <li>找到系统托盘菜单中的SSR纸飞机图标右键调出菜单</li>
          <li>服务器-&gt;找到对应本站的节点组-&gt;选择一个节点单击</li>
        </ol>
        <svg class="shot" width="535" height="270.7" viewBox="440 5554.7 903 457" preserveAspectRatio="none">
          <rect x="440" y="5956" width="903" height="56" fill="url(#taskbar-wide)"/>
          <use href="#tray" x="246.5" y="5983.6"/>
          <g class="clock"><text x="1178" y="5990.5">中</text><text class="sg" x="1221" y="5991.5">S</text><text class="cnt" x="1051" y="5992.5">..6</text><text x="1281" y="5977" textLength="43">10:47</text><text x="1261" y="6003" textLength="81">2018/12/8</text></g>
          <g transform="translate(687.5 5577.5)" class="win">
            <rect class="pop" width="330" height="404"/><rect class="hl" x="4" y="106" width="322" height="30"/><use href="#menu-lines"/>
            <text x="49" y="25.5">系统代理模式</text><text x="49" y="55.5">PAC</text><text x="49" y="86">代理规则</text><text x="49" y="126.5">服务器</text><text x="49" y="289">二维码扫描...</text><text x="49" y="320">剪贴板批量导入ssr://链接...</text><text x="49" y="360.5">帮助</text><text x="49" y="391">退出</text>
          </g>
          <g class="win">
            <rect class="pop" x="1010" y="5680" width="324" height="251"/><rect class="hl" x="1013" y="5714" width="317" height="30.5"/>
            <path d="M1052 5749.500h278M1052 5820h278M1052 5860.500h278" stroke="#d5d5d5" stroke-width="1.5"/><use href="#chev" x="1314.5" y="5698.5"/><use href="#chev" x="1314.5" y="5729"/><circle cx="1062.6" cy="5729" r="3.8"/>
            <text x="1073.5" y="5704.5" textLength="110">UIremixdemo</text><text x="1073.5" y="5735" textLength="178">UIremixdemo - 单端口</text>
            <text x="1057" y="5775">编辑服务器...</text><text x="1057" y="5806">从文件导入服务器...</text><text x="1057" y="5846">优先相同节点连接同一地址</text><text x="1057" y="5886.5">服务器连接统计...</text><text x="1057" y="5917.5">断开当前所有连接</text>
            <rect class="pop" x="470" y="5710.5" width="542" height="129.5"/><rect class="hl" x="474" y="5806" width="534.5" height="30.5"/><rect x="474" y="5806" width="30.5" height="30.5" fill="#4ba6f0"/><path d="M483 5821l4 5 8-11" fill="none" stroke="#222" stroke-width="2"/>
            <text x="518" y="5735" textLength="394">剩余流量：100.00% 33.15GB (www.google.com:1)</text><text x="518" y="5765.5" textLength="417">过期时间：1989-06-04 00:05:00 (www.google.com:2)</text><text x="518" y="5796" textLength="298">演示节点1 - 14667 单端口 (222:14667)</text><text x="518" y="5826.5" textLength="288">演示节点2 - 14667 单端口 (33:14667)</text>
          </g>
        </svg>
        <ol start="4">
          <li>打开浏览器输入<a>www.google.com试试吧！</a></li>
        </ol>
        <p class="tail">以上教程均为电脑没有安装过任何代理软件的步骤，如果安装过其他代理软件可能产生冲突</p>
      </div>
    </article>

    <div class="tiles">
      <div class="tile">SSTap</div>
      <div class="tile">ShadowsocksX-NG-R8 macOS</div>
      <div class="tile">Electron SSR Linux</div>
      <div class="tile">SSR / SSRR Android</div>
      <div class="tile">Quantumult iOS</div>
      <div class="tile">Shadowrocket iOS</div>
      <div class="tile">Potatso Lite iOS</div>
      <div class="tile">Merlin &amp; Padavan</div>
    </div>
  </section>
</main>

<footer class="footer">©2023 云 | Powered by <a>SSPANEL</a></footer>

<div class="topbar"><svg class="avatar" viewBox="0 0 44.6 44.6"><circle cx="22.3" cy="22.3" r="22.3" fill="#39a4e0"/><circle cx="22.3" cy="22.3" r="20.5" fill="url(#dots)"/><path d="M6 9l5-5v7zM34 4l5 5-5 2zM4 34l6-1 1 6zM34 33l7 1-7 5z" fill="#fff"/></svg></div>

<aside class="sidebar">
  <div class="brand"><svg><use href="#globe"/></svg>云</div>
  <nav class="menu">
    <h4>我的</h4>
    <a><svg><use href="#wallet"/></svg>用户中心</a>
    <a><svg><use href="#account"/></svg>账户信息</a>
    <a><svg><use href="#sync"/></svg>资料编辑</a>
    <a><svg><use href="#hourglass"/></svg>流量记录</a>
    <a><svg><use href="#important"/></svg>订阅记录</a>
    <a><svg><use href="#loyalty"/></svg>邀请链接</a>
    <h4>使用</h4>
    <a><svg><use href="#flight"/></svg>节点列表</a>
    <a><svg><use href="#compare"/></svg>中转规则</a>
    <a><svg><use href="#eye"/></svg>延迟检测</a>
    <a><svg><use href="#announce"/></svg>网站公告</a>
    <a><svg><use href="#start"/></svg>使用教程</a>
    <h4>审计</h4>
    <a><svg><use href="#bank"/></svg>审计规则</a>
    <a><svg><use href="#late"/></svg>审计记录</a>
    <h4>商店</h4>
    <a><svg><use href="#code"/></svg>充值</a>
    <a><svg><use href="#shop"/></svg>套餐购买</a>
    <a><svg><use href="#cart"/></svg>购买记录</a>
  </nav>
</aside>
</body>
</html>
```

FILE: styles.css
```css
* { box-sizing: border-box; }
body {
  position: relative;
  margin: 0;
  width: 1351px;
  height: 4096px;
  overflow: hidden;
  display: flex;
  flex-direction: column;
  background: #f8f9fe;
  color: #525f6f;
  font: 12.44px "Liberation Sans", "Noto Sans CJK SC", sans-serif;
}
.sprite { position: absolute; }
svg { flex: none; }

.content { height: 4063.5px; padding-left: 198px; }

/* Banner */
.hero {
  position: relative;
  height: 193px;
  padding: 97px 0 0 9.5px;
  background: linear-gradient(90deg, #90a4f6, #76b2f1 38%, #67b9ef 56%, #52c8ea 76%, #43cfea 94%);
  box-shadow: 0 1px 10px rgba(30, 15, 0, .75);
}
.waves { position: absolute; left: 0; top: 0; }
.hero h1 { position: relative; margin: 0; color: #fff; font-size: 36px; font-weight: 300; line-height: 40px; }

/* Main card */
.card {
  position: relative;
  height: 3835.5px;
  margin: -28.3px 10.7px 0 22.7px;
  padding: 20px 13.3px 0;
  background: #fff;
  border-radius: 9px;
  box-shadow: 0 0 18px rgba(136, 152, 170, .35);
}
.tabs { display: flex; height: 40.7px; border-bottom: 1px solid #dee2e6; }
.tab {
  display: flex;
  align-items: center;
  height: 40px;
  padding: 0 12.8px;
  border-bottom: 2.5px solid transparent;
}
.tab.active { border-color: #5b9bd5; }
.tab svg { width: 17.5px; height: 17.5px; margin-right: 4px; fill: #4c566e; }

.tile {
  height: 39.7px;
  padding: 0 12.5px;
  line-height: 39px;
  background: #fff;
  border: 1px solid #e6e6e6;
  border-bottom: 0;
  box-shadow: 0 0 12px rgba(0, 0, 0, .13);
}
.tile.open { height: 3399px; margin-top: 18.7px; padding: 0; border-bottom: 1px solid #e6e6e6; }
.tile-head { height: 39.5px; padding: 0 12.5px; line-height: 38px; border-bottom: 1px solid #e3e3e3; }
.tiles { margin-top: 19.3px; }
.tiles .tile:last-child { border-bottom: 1px solid #e6e6e6; }

/* Guide text */
.guide {
  padding: 33.5px 26px 0;
  color: #24292e;
  font: 13.33px/20px "Noto Sans", "Noto Sans CJK SC", sans-serif;
}
.guide h2 { height: 32px; margin: 20.1px 0 0; border-bottom: 1px solid #eaecef; font-size: 19.7px; line-height: 25px; }
.guide h2:first-child { margin-top: 0; }
.guide h2.pick { margin-top: 20px; }
.guide h3 { height: 21px; margin: 19.5px 0 9.9px; font-size: 16.6px; line-height: 21px; }
.guide p { height: 20px; margin: 13px 0 0; white-space: nowrap; }
.guide p.lead { letter-spacing: -.06px; }
.guide p.tail { margin-top: 2.4px; }
.guide ol { margin: 0; padding: 0 0 0 27px; }
.guide li { height: 22.2px; line-height: 22.2px; }
.guide h2 + ol { margin-top: 10.4px; }
.guide a { color: #2570d4; }
.shot { display: block; margin: 2.5px 0 11px; }
.shot.first { margin: 12.8px 0 0; }
.shot.tray-menu { margin: 7.4px 0 20px; }
.shot.last { margin-bottom: 0; }

/* Pictures of the site panel */
.ui { font: 20.9px "Liberation Sans", "Noto Sans CJK SC", sans-serif; fill: #5a6580; }
.ttl { font-size: 28px; fill: #3d5582; }
.lnk { font-size: 18.25px; fill: #459ce8; }
.num { font-size: 15.5px; font-weight: 700; fill: #222; text-anchor: middle; }
.mini { font-size: 14px; fill: #000; }
.url { font-size: 25px; fill: #549bdd; }
.foot { fill: #459ce8; }
.btn { fill: #52aaf3; filter: drop-shadow(0 2px 2px rgba(0, 0, 0, .3)); }
.btn-t { font-size: 19.7px; fill: #fff; }
.field { fill: #f1f1f1; stroke: #d6d6d6; stroke-width: 2; stroke-dasharray: 5 3; }
.fab { filter: drop-shadow(0 2px 3px rgba(0, 0, 0, .35)); }
.soft { filter: drop-shadow(0 0 5px rgba(100, 110, 150, .25)); }
.note { font: 20.05px "Noto Sans CJK SC", sans-serif; fill: #ee2a2e; }
.mark { fill: none; stroke: #e3242b; stroke-width: 2.5; }

/* Pictures of the desktop client */
.win { font: 16.7px "Open Sans", "Noto Sans CJK SC", sans-serif; fill: #1c1c1c; }
.w18 { font: 17.5px "Open Sans", "Noto Sans CJK SC", sans-serif; }
.pop { fill: #f1f1f1; stroke: #bcbcbc; stroke-width: 1.5; filter: drop-shadow(3px 3px 2px rgba(0, 0, 0, .5)); }
.hl { fill: #91c9f7; }
.wbtn { fill: #e1e1e1; stroke: #adadad; stroke-width: 1.5; }
.wbtn.focus { stroke: #0078d7; stroke-width: 3; }
.status { font: 17.5px "Open Sans", "Noto Sans CJK SC", sans-serif; fill: #9da5b4; }
.clock { font: 17.5px "Open Sans", "Noto Sans CJK SC", sans-serif; fill: #f2f2f2; }
.sg { font-weight: 700; font-size: 21px; fill: #fff; }
.cnt { font-size: 11px; }

/* Footer */
.footer {
  flex: 1;
  padding-left: 12px;
  border-top: 1px solid #e6e9ef;
  background: #fbfdfd;
  line-height: 36px;
  text-align: center;
}
.footer a { color: #4a96d9; }

/* Floating bars */
.topbar {
  position: absolute;
  left: 0;
  top: 2379.5px;
  width: 1351px;
  height: 47px;
  display: flex;
  justify-content: flex-end;
  padding: 6.5px .8px 0 0;
  background: rgba(0, 0, 0, .105);
  box-shadow: 0 0 7px rgba(0, 0, 0, .6);
}
.avatar { width: 26.4px; height: 26.4px; }
.sidebar {
  position: absolute;
  left: 0;
  top: 2379.5px;
  width: 198px;
  height: 755.5px;
  background: #fff;
  box-shadow: 0 0 8px rgba(136, 152, 170, .3);
}
.brand {
  display: flex;
  align-items: center;
  height: 46px;
  padding-left: 13px;
  border-bottom: 1px solid #e3e5ea;
  color: #32496f;
  font-size: 15.5px;
}
.brand svg { width: 23.5px; height: 23.5px; margin-right: 4.5px; fill: #32507f; }
.menu { padding-top: 6.2px; }
.menu h4 { height: 39.5px; margin: 0; padding-left: 13.3px; font-size: 12.44px; font-weight: 400; line-height: 39px; }
.menu a { display: flex; align-items: center; height: 29.8px; padding-left: 26.3px; }
.menu svg { width: 17.7px; height: 17.7px; margin-right: 3.4px; fill: #4c566e; }
```
